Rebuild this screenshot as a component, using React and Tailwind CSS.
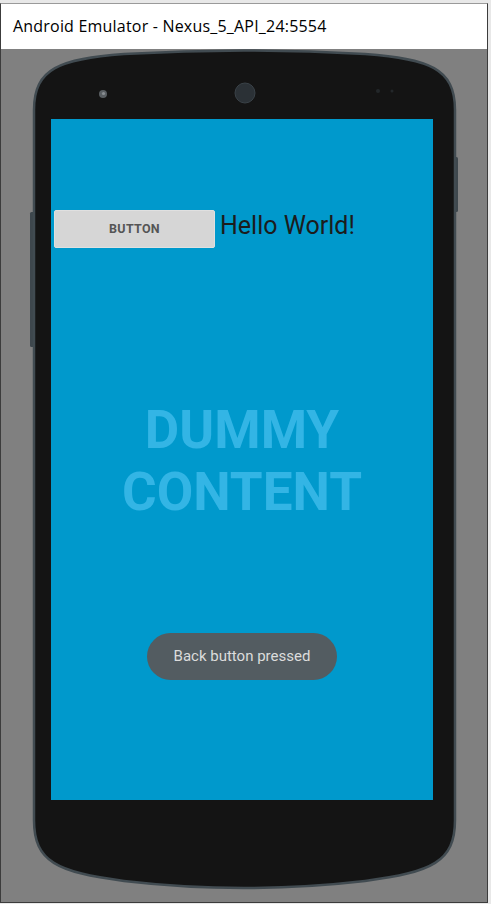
import React from "react";

function PhoneShape() {
  return (
    <svg
      className="absolute inset-0"
      width="421"
      height="842"
      viewBox="0 0 421 842"
      overflow="visible"
    >
      {/* side buttons */}
      <rect x="-4" y="162" width="5" height="135" rx="1.5" fill="#3e474d" />
      <rect x="420" y="107" width="4" height="55" rx="1.5" fill="#3e474d" />
      <path
        d="M0 60 C0 18 26 9 90 4 Q210 -3 331 4 C395 9 421 18 421 60 L421 770 C421 812 398 822 331 831 Q210 845 90 831 C23 822 0 812 0 770 Z"
        fill="#141414"
        stroke="#414b51"
        strokeWidth="2.5"
      />
      {/* front sensors */}
      <circle cx="69" cy="44" r="4" fill="#5a5f63" />
      <circle cx="69.5" cy="43.5" r="1.6" fill="#8a8f93" />
      <circle cx="211" cy="43" r="10" fill="#2b3136" />
      <circle cx="211" cy="43" r="10" fill="none" stroke="#3a4248" strokeWidth="1" />
      <circle cx="344" cy="41" r="2" fill="#23272a" />
      <circle cx="358" cy="41" r="1.5" fill="#23272a" />
    </svg>
  );
}

export default function App() {
  return (
    <div className="w-[491px] h-[904px] bg-[#e8e8e8] pt-[3px] overflow-hidden">
      <div className="w-[488px] h-[900px] flex flex-col border-t border-l border-r border-b border-t-[#9a9a9a] border-l-[#3c3c3c] border-r-[#3c3c3c] border-b-[#3c3c3c]">
        <div className="h-[45px] bg-white flex items-center pl-[12px] pb-[1px]">
          <span
            className="text-[16px] tracking-[0.2px] text-black"
            style={{ fontFamily: '"Open Sans", "Noto Sans", sans-serif' }}
          >
            Android Emulator - Nexus_5_API_24:5554
          </span>
        </div>
        <div className="flex-1 bg-[#808080] pl-[33px] pt-[1px]">
          <div className="relative w-[421px] h-[842px]">
            <PhoneShape />
            <div className="relative pt-[69px] pl-[17px]">
              <div
                className="w-[382px] h-[681px] bg-[#0099cc] flex flex-col items-start"
                style={{ fontFamily: "Roboto, sans-serif" }}
              >
                <div className="mt-[91px] ml-[3px] flex items-start gap-[5px]">
                  <div className="w-[161px] h-[38px] bg-[#d6d6d6] rounded-[2px] border border-[#e0e0e0] flex items-center justify-center">
                    <span className="text-[12.5px] font-bold text-[#555555] tracking-[0.3px]">
                      BUTTON
                    </span>
                  </div>
                  <span className="text-[25px] leading-[29px] text-[#1c1c1c] mt-[1px]">
                    Hello World!
                  </span>
                </div>
                <div className="self-center mt-[151px] text-center text-[53px] leading-[62px] font-bold text-[#33b5e5]">
                  DUMMY
                  <br />
                  CONTENT
                </div>
                <div className="self-center mt-[110px] h-[47px] w-[190px] rounded-full bg-[#535c61] flex items-center justify-center">
                  <span className="text-[15px] text-[#dcdcdc]">
                    Back button pressed
                  </span>
                </div>
              </div>
            </div>
          </div>
        </div>
      </div>
    </div>
  );
}
